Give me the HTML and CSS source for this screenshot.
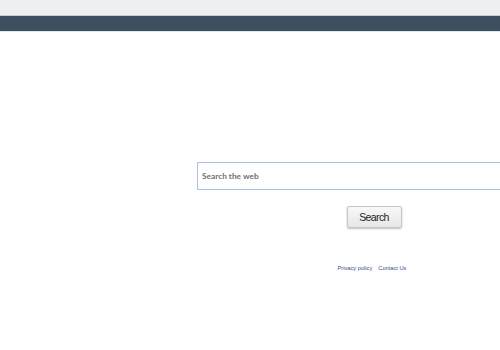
FILE: index.html
```html
<!DOCTYPE html>
<html lang="en">
<head>
  <meta charset="UTF-8">
  <title>Search</title>
  <link rel="stylesheet" href="styles.css">
</head>
<body>
  <div class="topbar"></div>
  <div class="navbar"></div>

  <div class="main">
    <form class="search-form">
      <input type="text" class="search-input" placeholder="Search the web">
      <div class="button-row">
        <button type="button" class="search-button">Search</button>
      </div>
      <div class="footer-links">
        <a href="#">Privacy policy</a>
        <a href="#">Contact Us</a>
      </div>
    </form>
  </div>
</body>
</html>
```

FILE: styles.css
```css
/* Base page */
body {
  margin: 0;
  background-color: #FFFFFF;
  font-family: 'Liberation Sans', Arial, sans-serif;
  overflow: hidden;
}
.topbar {
  height: 15px;
  background-color: #EFF0F1;
  border-bottom: 1px solid #C9CDD1;
}
.navbar {
  height: 15px;
  background-color: #3E5060;
  border-bottom: 1px solid #E3E7EA;
}
.main {
  padding-top: 130px;
  padding-left: 197px;
}
/* form runs to the right edge; the centre column sits at x=374 */
.search-form {
  width: 303px;
  margin: 0;
}
.search-input {
  display: block;
  box-sizing: border-box;
  width: 100%;
  height: 28px;
  margin: 0;
  padding: 0 4px;
  border: 1px solid #A9C0EA;
  border-right: none;
  font-family: 'Lato', 'Liberation Sans', sans-serif;
  font-size: 8.3px;
  font-weight: 700;
  color: #555555;
  outline: none;
}
.search-input::placeholder {
  color: #707070;
}
.button-row {
  display: flex;
  justify-content: center;
  margin-top: 16px;
  padding-left: 51px;
}
.search-button {
  width: 55px;
  height: 22px;
  padding: 0;
  border: 1px solid #C6C6C6;
  border-radius: 2px;
  background: linear-gradient(#F8F8F8, #E6E6E6);
  box-shadow: 0 1px 2px rgba(0, 0, 0, 0.25);
  font-family: 'Liberation Sans', Arial, sans-serif;
  font-size: 10.5px;
  letter-spacing: -0.6px;
  color: #222222;
  cursor: pointer;
}
.footer-links {
  display: flex;
  justify-content: center;
  gap: 6px;
  margin-top: 37px;
  padding-left: 47px;
}
.footer-links a {
  font-size: 5.7px;
  color: #3A4A8C;
  text-decoration: none;
}
```
